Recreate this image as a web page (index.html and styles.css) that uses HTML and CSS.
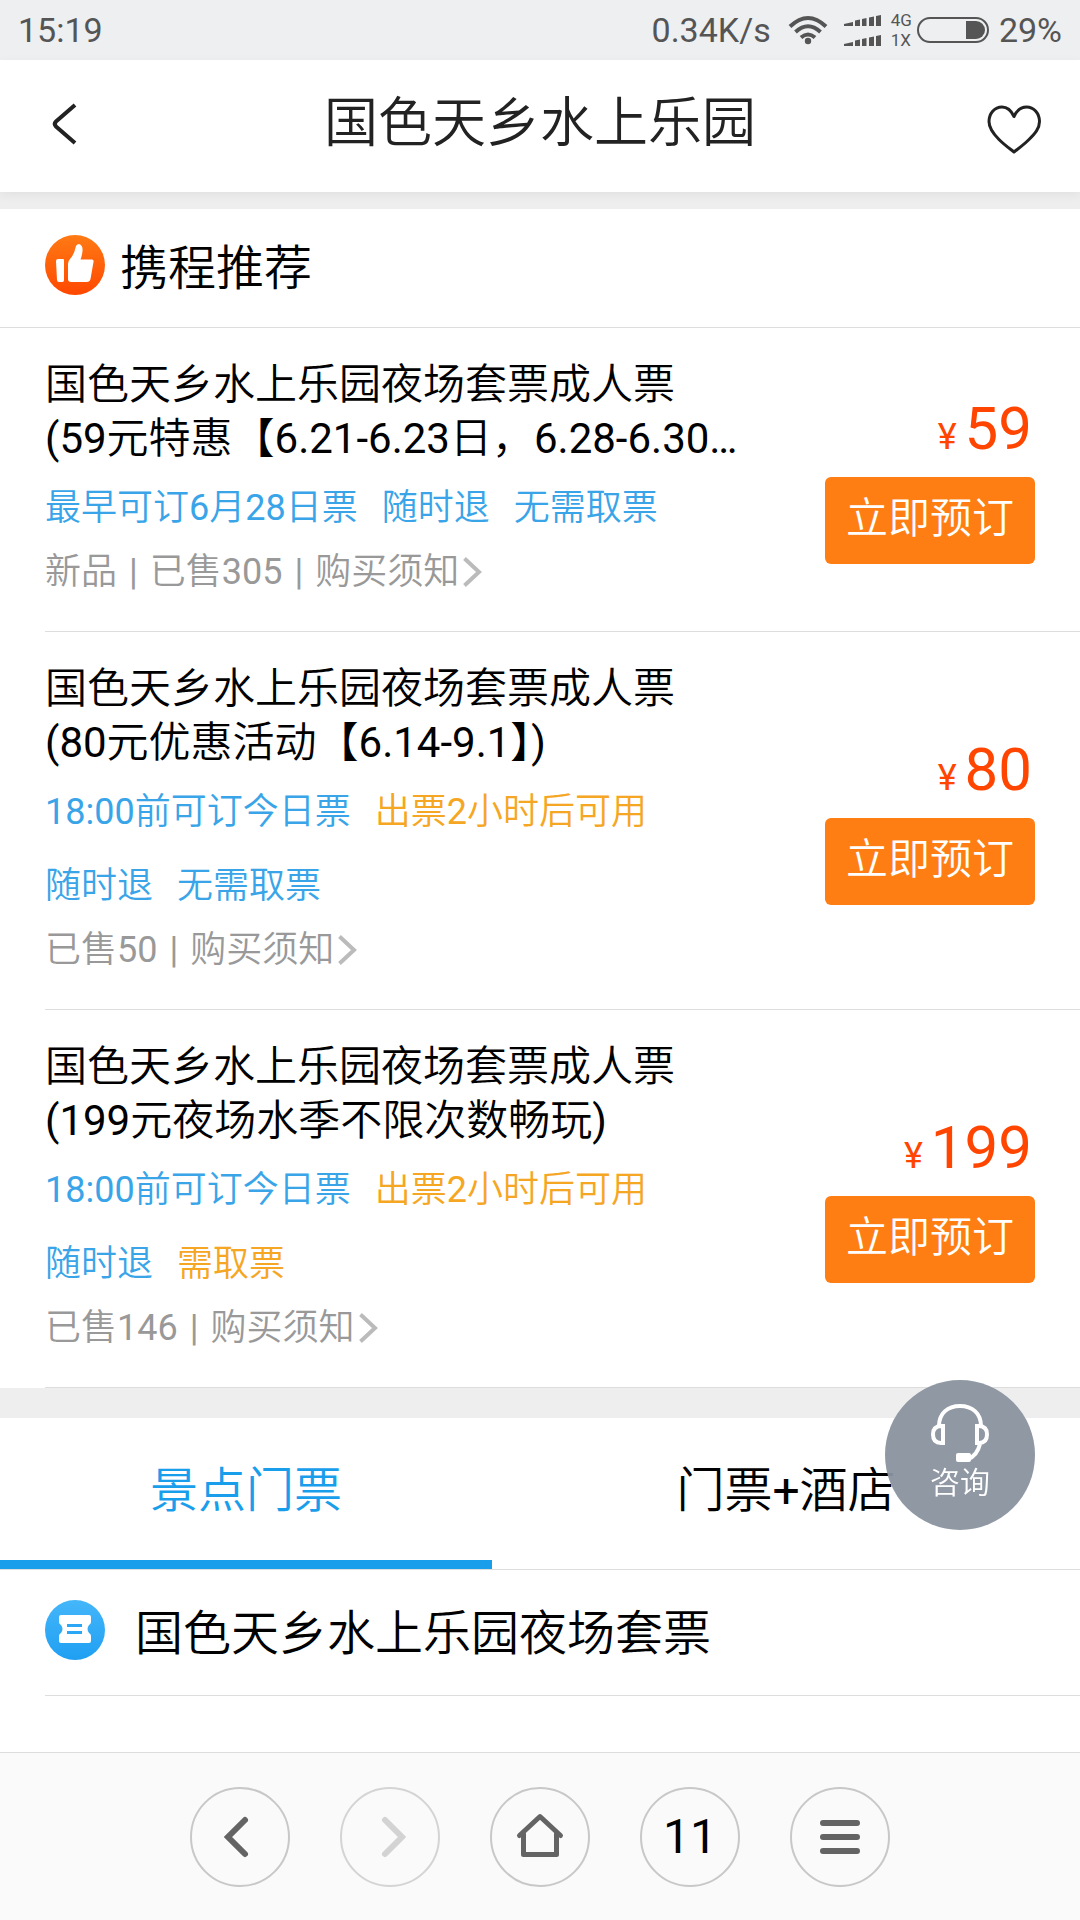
FILE: index.html
```html
<!DOCTYPE html>
<html lang="zh-CN">
<head>
<meta charset="utf-8">
<meta name="viewport" content="width=device-width">
<title>国色天乡水上乐园</title>
<link rel="stylesheet" href="styles.css">
</head>
<body>
<div class="status">
  <span class="status-time">15:19</span>
  <span>0.34K/s</span>
  <svg class="wifi" width="40" height="30" viewBox="0 0 40 30" aria-hidden="true">
    <g fill="none" stroke="#555" stroke-width="4">
      <path d="M2 11.500Q20-5.500 38 11.500"/><path d="M7.500 17Q20 5.500 32.500 17"/><path d="M13 22.500Q20 16.500 27 22.500"/>
    </g>
    <circle cx="20" cy="26" r="3.200" fill="#555"/>
  </svg>
  <svg class="signal" width="38" height="32" viewBox="0 0 38 32" aria-hidden="true">
    <g fill="#555">
      <path id="bars" d="M0 12V10L9 8V12ZM11 12V6.500L16 5.500V12ZM18 12V5L22.500 4V12ZM25 12V3.500L30 2.500V12ZM32 12V2L37 1V12Z"/>
      <use href="#bars" y="20"/>
    </g>
  </svg>
  <span class="network"><span>4G</span><span>1X</span></span>
  <svg class="battery" width="72" height="26" viewBox="0 0 72 26" aria-hidden="true">
    <rect x="1" y="1" width="70" height="24" rx="12" fill="none" stroke="#555" stroke-width="2"/>
    <path d="M49 4H59A9 9 0 0 1 59 22H49Z" fill="#555"/>
  </svg>
  <span>29%</span>
</div>

<header class="header">
  <button class="icon-button" type="button" aria-label="返回">
    <svg width="60" height="60" viewBox="0 0 60 60"><path d="M37 11L18 27.500Q15.500 30 18 32.500L37 49" fill="none" stroke="#222" stroke-width="4"/></svg>
  </button>
  <h1 class="title">国色天乡水上乐园</h1>
  <button class="icon-button" type="button" aria-label="收藏">
    <svg width="60" height="60" viewBox="0 0 60 60"><path d="M32 22.500C29 16 25 13 20 13C12.500 13 7 19.500 7 27.500C7 34.500 11 39.500 17 45.500C23 51.500 29 55.500 32 58C35 55.500 41 51.500 47 45.500C53 39.500 57.500 34.500 57.500 27.500C57.500 19.500 52 13 44.500 13C39 13 35 16 32 22.500Z" fill="none" stroke="#222" stroke-width="3" stroke-linejoin="round"/></svg>
  </button>
</header>

<main class="main">
  <section class="section">
    <h2 class="section-head">
      <svg width="60" height="60" viewBox="0 0 60 60" aria-hidden="true">
        <defs><linearGradient id="orange" x1="0" y1="0" x2="0" y2="1"><stop offset="0" stop-color="#ff7a14"/><stop offset="1" stop-color="#ff4800"/></linearGradient></defs>
        <circle cx="30" cy="30" r="30" fill="url(#orange)"/>
        <path d="M11 26Q11 24 13 24H18Q19 24 19 25V45Q19 47 17.500 47H14Q12 47 12 45Z" fill="#fff"/>
        <path d="M23 29Q23 26 25 24Q29 20 31 11Q32 9 34 9Q38 10 37.500 16Q37 21 35.500 24.500H47Q49 24.500 48.500 27L45.500 44Q45 47 41.500 47H26Q23 47 23 44Z" fill="#fff"/>
      </svg>
      携程推荐
    </h2>

    <article class="ticket">
      <div class="ticket-info">
        <h3 class="ticket-name">国色天乡水上乐园夜场套票成人票<br>(59元特惠【6.21-6.23日，6.28-6.30…</h3>
        <div class="tags"><span>最早可订6月28日票</span><span>随时退</span><span>无需取票</span></div>
        <p class="meta">新品<i>|</i>已售305<i>|</i><a href="#">购买须知<svg width="20" height="30" viewBox="0 0 20 30" aria-hidden="true"><path d="M1.500 1.500L16 15L1.500 28.500" fill="none" stroke="#bbb" stroke-width="4"/></svg></a></p>
      </div>
      <div class="buy"><p class="price"><small>¥</small>59</p><button class="book" type="button">立即预订</button></div>
    </article>

    <article class="ticket">
      <div class="ticket-info">
        <h3 class="ticket-name">国色天乡水上乐园夜场套票成人票<br>(80元优惠活动【6.14-9.1】)</h3>
        <div class="tags"><span>18:00前可订今日票</span><span class="warn">出票2小时后可用</span><span>随时退</span><span>无需取票</span></div>
        <p class="meta">已售50<i>|</i><a href="#">购买须知<svg width="20" height="30" viewBox="0 0 20 30" aria-hidden="true"><path d="M1.500 1.500L16 15L1.500 28.500" fill="none" stroke="#bbb" stroke-width="4"/></svg></a></p>
      </div>
      <div class="buy"><p class="price"><small>¥</small>80</p><button class="book" type="button">立即预订</button></div>
    </article>

    <article class="ticket">
      <div class="ticket-info">
        <h3 class="ticket-name">国色天乡水上乐园夜场套票成人票<br>(199元夜场水季不限次数畅玩)</h3>
        <div class="tags"><span>18:00前可订今日票</span><span class="warn">出票2小时后可用</span><span>随时退</span><span class="warn">需取票</span></div>
        <p class="meta">已售146<i>|</i><a href="#">购买须知<svg width="20" height="30" viewBox="0 0 20 30" aria-hidden="true"><path d="M1.500 1.500L16 15L1.500 28.500" fill="none" stroke="#bbb" stroke-width="4"/></svg></a></p>
      </div>
      <div class="buy"><p class="price"><small>¥</small>199</p><button class="book" type="button">立即预订</button></div>
    </article>
  </section>

  <div class="tabs">
    <button class="tab tab-active" type="button">景点门票</button>
    <button class="tab tab-wide" type="button">门票+酒店</button>
  </div>
  <h2 class="group-head">
    <svg width="60" height="60" viewBox="0 0 60 60" aria-hidden="true">
      <defs><linearGradient id="blue" x1="0" y1="0" x2="0" y2="1"><stop offset="0" stop-color="#45b6fa"/><stop offset="1" stop-color="#1f9ff2"/></linearGradient></defs>
      <circle cx="30" cy="30" r="30" fill="url(#blue)"/>
      <path d="M16 15H44Q46 15 46 17V22Q46 24 44 25Q41 29 44 33Q46 34 46 36V41Q46 43 44 43H16Q14 43 14 41V36Q14 34 16 33Q19 29 16 25Q14 24 14 22V17Q14 15 16 15Z" fill="#fff"/>
      <path d="M22 25.500H37M22 32.500H37" stroke="#2ba7f5" stroke-width="3"/>
    </svg>
    国色天乡水上乐园夜场套票
  </h2>
</main>

<button class="consult" type="button">
  <svg width="60" height="60" viewBox="0 0 60 60" aria-hidden="true">
    <g fill="none" stroke="#fff" stroke-width="4">
      <path d="M9 23C9 10 18 3 30 3S51 10 51 23"/>
      <path d="M13 23V40H11Q3 40 3 31.500T11 23Z"/>
      <path d="M47 23V40H49Q57 40 57 31.500T49 23Z"/>
      <path d="M50 41Q47 53 38 56"/>
    </g>
    <rect x="26" y="50" width="15" height="9" rx="2" fill="#fff"/>
  </svg>
  咨询
</button>

<nav class="toolbar" aria-label="浏览器">
  <button type="button" aria-label="后退"><svg width="60" height="60" viewBox="0 0 60 60"><path d="M35 13L18 30L35 47" fill="none" stroke="#646464" stroke-width="6" stroke-linecap="round"/></svg></button>
  <button type="button" aria-label="前进" disabled><svg width="60" height="60" viewBox="0 0 60 60"><path d="M25 13L42 30L25 47" fill="none" stroke="#646464" stroke-width="6" stroke-linecap="round"/></svg></button>
  <button type="button" aria-label="主页"><svg width="60" height="60" viewBox="0 0 60 60"><path d="M9.500 28.500L30 9.500L50.500 28.500M13.500 27V47.500H46.500V27" fill="none" stroke="#646464" stroke-width="5" stroke-linecap="round" stroke-linejoin="round"/></svg></button>
  <button type="button">11</button>
  <button type="button" aria-label="菜单"><svg width="60" height="60" viewBox="0 0 60 60"><path d="M13 16H47M13 30H47M13 44H47" fill="none" stroke="#646464" stroke-width="6" stroke-linecap="round"/></svg></button>
</nav>
</body>
</html>
```

FILE: styles.css
```css
* {
  box-sizing: border-box;
}

body {
  margin: 0;
  min-height: 100vh;
  display: flex;
  flex-direction: column;
  background: #fff;
  color: #000;
  font-family: Roboto, "Noto Sans CJK SC DemiLight", "Noto Sans CJK SC", sans-serif;
  font-size: 36px;
}

h1, h2, h3, p {
  margin: 0;
  font-weight: 400;
}

button {
  border: 0;
  padding: 0;
  background: none;
  color: inherit;
  font: inherit;
}

svg {
  display: block;
  flex: none;
}

.status {
  display: flex;
  align-items: center;
  height: 60px;
  padding: 0 18px;
  background: #edeff1;
  color: #555;
  font-size: 34px;
}

.status-time {
  flex: 1;
}

.wifi {
  margin: 0 16px 0 17px;
}

.network {
  display: flex;
  flex-direction: column;
  margin: 0 5px 0 9px;
  font-size: 17px;
  line-height: 20px;
}

.battery {
  margin-right: 10px;
}

.header {
  position: relative;
  display: flex;
  align-items: center;
  justify-content: space-between;
  height: 132px;
  padding: 0 38px 4px;
  background: #fff;
  color: #222;
  box-shadow: 0 3px 10px rgba(0, 0, 0, 0.06);
}

.title {
  font-size: 54px;
  line-height: 72px;
}

.main {
  flex: 1;
}

.section {
  border-top: 17px solid #eee;
  border-bottom: 30px solid #eee;
}

.section-head {
  display: flex;
  align-items: center;
  gap: 15px;
  height: 119px;
  padding: 2px 45px 0;
  border-bottom: 1px solid #ddd;
  font-size: 48px;
  line-height: 60px;
}

.section-head svg,
.group-head svg {
  margin-bottom: 8px;
}

.ticket {
  display: flex;
  align-items: center;
  justify-content: space-between;
  margin-left: 45px;
  padding-right: 45px;
  border-bottom: 1px solid #ddd;
}

.ticket-info {
  flex: 1;
  max-width: 700px;
  padding: 30px 0 32px;
}

.ticket-name {
  margin-bottom: 5px;
  font-size: 42px;
  line-height: 54px;
  white-space: nowrap;
}

.tags {
  display: flex;
  flex-wrap: wrap;
  column-gap: 24px;
  color: #39a5e8;
  line-height: 74px;
}

.tags .warn {
  color: #f5a623;
}

.meta {
  display: flex;
  color: #999;
  line-height: 54px;
}

.meta i {
  padding: 0 12px;
  font-style: normal;
}

.meta a {
  display: flex;
  align-items: center;
  gap: 4px;
  color: inherit;
  text-decoration: none;
}

.buy {
  display: flex;
  flex-direction: column;
  align-items: flex-end;
  gap: 7px;
}

.price {
  padding-right: 3px;
  color: #ff4500;
  font-size: 60px;
  line-height: 66px;
}

.price small {
  margin-right: 8px;
  font-size: 36px;
}

.book {
  width: 210px;
  height: 87px;
  padding-bottom: 12px;
  border-radius: 6px;
  background: #ff7e14;
  color: #fff;
  font-size: 42px;
}

.tabs {
  display: flex;
  height: 152px;
  border-bottom: 1px solid #ddd;
}

.tab {
  flex: 41;
  padding-bottom: 6px;
  border-bottom: 9px solid transparent;
  font-size: 48px;
}

.tab-wide {
  flex: 49;
}

.tab-active {
  border-color: #199eeb;
  color: #199eeb;
}

.group-head {
  display: flex;
  align-items: center;
  gap: 30px;
  height: 126px;
  margin-left: 45px;
  padding-top: 2px;
  border-bottom: 1px solid #ddd;
  font-size: 48px;
  line-height: 60px;
}

.consult {
  position: fixed;
  right: 45px;
  bottom: 390px;
  display: flex;
  flex-direction: column;
  align-items: center;
  justify-content: center;
  width: 150px;
  height: 150px;
  padding-bottom: 4px;
  border-radius: 50%;
  background: rgba(137, 146, 158, 0.95);
  color: #fff;
  font-size: 30px;
  line-height: 40px;
}

.toolbar {
  display: flex;
  align-items: center;
  justify-content: center;
  gap: 50px;
  height: 168px;
  border-top: 1px solid #ddd;
  background: #fafafa;
}

.toolbar button {
  display: flex;
  align-items: center;
  justify-content: center;
  width: 100px;
  height: 100px;
  border: 2px solid #c8c8c8;
  border-radius: 50%;
  color: #000;
  font-size: 48px;
}

.toolbar button:disabled {
  border-color: #d4d4d4;
}

.toolbar button:disabled svg {
  opacity: 0.25;
}
```
